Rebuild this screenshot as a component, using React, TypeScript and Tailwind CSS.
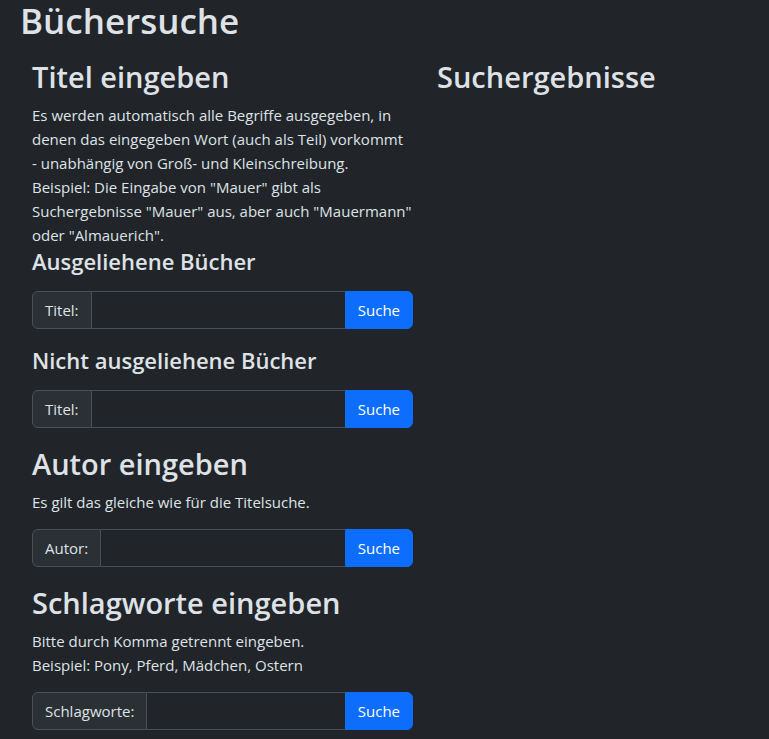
import type { ReactNode } from "react";

function SectionTitle({ children }: { children: ReactNode }) {
  return <h2 className="mb-[7px] pt-px text-[29px] leading-[38px] font-semibold">{children}</h2>;
}

function GroupTitle({ children }: { children: ReactNode }) {
  return <h3 className="text-[22px] leading-[29px] font-semibold">{children}</h3>;
}

function SearchForm({ id, label }: { id: string; label: string }) {
  return (
    <form className="mt-[15px] flex h-[38px]" onSubmit={(event) => event.preventDefault()}>
      <label
        htmlFor={id}
        className="flex items-center rounded-l-md border border-[#495057] bg-[#2b3035] px-3"
      >
        {label}
      </label>
      <input
        id={id}
        type="text"
        className="min-w-0 flex-1 border-y border-[#495057] bg-[#212529] px-3 outline-none focus:border-[#86b7fe]"
      />
      <button
        type="submit"
        className="rounded-r-md border border-[#0d6efd] bg-[#0d6efd] px-3 text-white hover:bg-[#0b5ed7]"
      >
        Suche
      </button>
    </form>
  );
}

export default function App() {
  return (
    <div className="min-h-screen bg-[#212529] pl-5 font-['Open_Sans','Noto_Sans',sans-serif] text-[15px] leading-6 text-[#dee2e6]">
      <h1 className="text-[35px] leading-[42px] font-semibold">Büchersuche</h1>
      <main className="mt-[15px] grid grid-cols-[minmax(0,381px)_1fr] gap-6 px-3">
        <div className="flex flex-col gap-4">
          <section>
            <SectionTitle>Titel eingeben</SectionTitle>
            <p>
              Es werden automatisch alle Begriffe ausgegeben, in denen das eingegeben Wort (auch als
              Teil) vorkommt
              <br />
              - unabhängig von Groß- und Kleinschreibung.
              <br />
              Beispiel: Die Eingabe von "Mauer" gibt als Suchergebnisse "Mauer" aus, aber auch
              "Mauermann" oder "Almauerich".
            </p>
            <div className="flex flex-col gap-[17px]">
              <div>
                <GroupTitle>Ausgeliehene Bücher</GroupTitle>
                <SearchForm id="titel-ausgeliehen" label="Titel:" />
              </div>
              <div>
                <GroupTitle>Nicht ausgeliehene Bücher</GroupTitle>
                <SearchForm id="titel-verfuegbar" label="Titel:" />
              </div>
            </div>
          </section>
          <section>
            <SectionTitle>Autor eingeben</SectionTitle>
            <p>Es gilt das gleiche wie für die Titelsuche.</p>
            <SearchForm id="autor" label="Autor:" />
          </section>
          <section>
            <SectionTitle>Schlagworte eingeben</SectionTitle>
            <p>
              Bitte durch Komma getrennt eingeben.
              <br />
              Beispiel: Pony, Pferd, Mädchen, Ostern
            </p>
            <SearchForm id="schlagworte" label="Schlagworte:" />
          </section>
        </div>
        <section>
          <SectionTitle>Suchergebnisse</SectionTitle>
        </section>
      </main>
    </div>
  );
}
